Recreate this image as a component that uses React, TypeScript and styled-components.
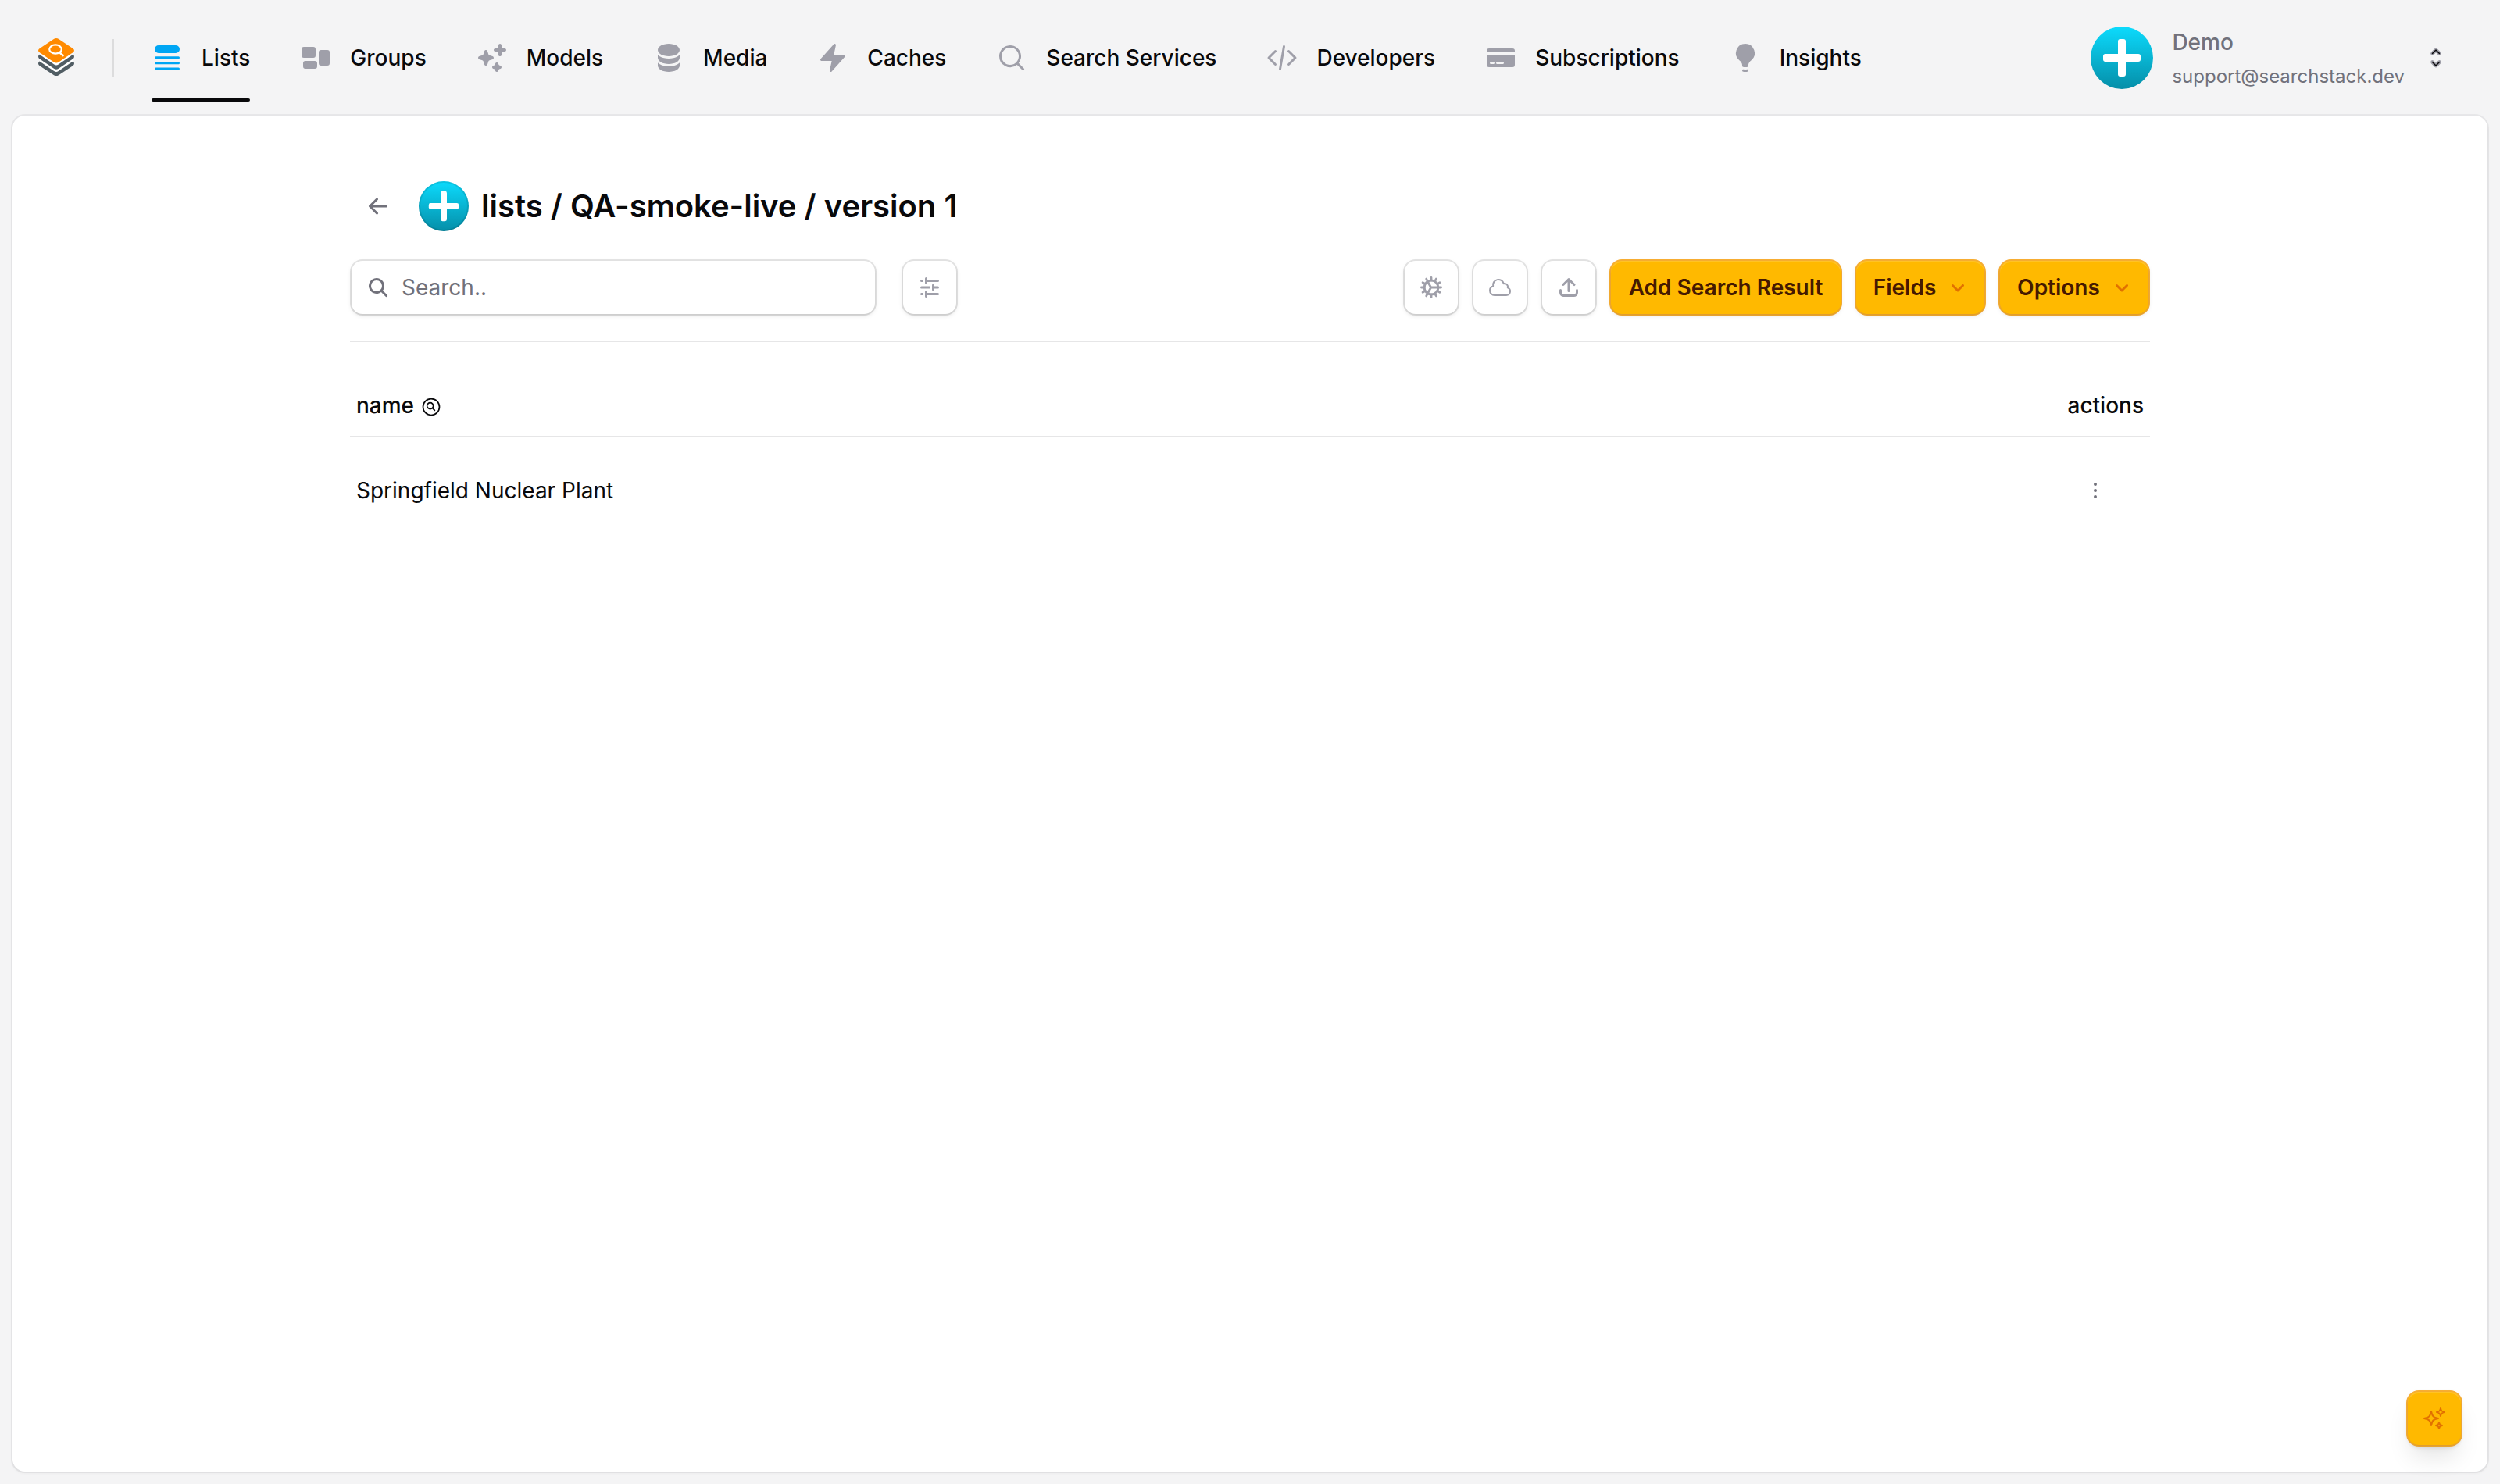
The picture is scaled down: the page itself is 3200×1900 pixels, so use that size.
import React from 'react';
import styled, { createGlobalStyle, css } from 'styled-components';
import {
  HiMiniQueueList,
  HiMiniRectangleGroup,
  HiMiniSparkles,
  HiMiniCircleStack,
  HiMiniBolt,
  HiMiniMagnifyingGlass,
  HiMiniCodeBracket,
  HiMiniCreditCard,
  HiMiniLightBulb,
  HiOutlineCloud,
  HiOutlineEllipsisVertical,
  HiOutlineMagnifyingGlassCircle,
  HiOutlineSparkles,
} from 'react-icons/hi2';

const GlobalStyle = createGlobalStyle`
  *, *::before, *::after { box-sizing: border-box; }
  body {
    margin: 0;
    background: #f4f4f5;
    color: #09090b;
    font-family: Inter, "Liberation Sans", sans-serif;
    font-size: 28px;
    line-height: 40px;
  }
  button, input { font: inherit; color: inherit; }
`;

const Page = styled.div`
  display: flex;
  flex-direction: column;
  height: 100vh;
`;

const Header = styled.header`
  display: flex;
  flex: none;
  height: 148px;
  padding: 0 32px;
`;

const Navbar = styled.nav`
  display: flex;
  flex: 1;
  align-items: center;
  gap: 32px;
`;

const LogoLink = styled.a`
  display: flex;
  padding: 16px;
`;

const LogoMark = styled.svg`
  display: block;
  width: 48px;
  height: 50px;
`;

const NavDivider = styled.span`
  width: 2px;
  height: 48px;
  background: rgba(9, 9, 11, 0.1);
`;

const NavItem = styled.a<{ $current?: boolean }>`
  position: relative;
  display: flex;
  align-items: center;
  gap: 24px;
  padding: 16px;
  font-weight: 500;
  white-space: nowrap;

  svg {
    width: 40px;
    height: 40px;
    color: ${(p) => (p.$current ? '#00a6f4' : '#9f9fa9')};
  }

  ${(p) =>
    p.$current &&
    css`
      &::after {
        content: '';
        position: absolute;
        left: 16px;
        right: 16px;
        bottom: -20px;
        height: 4px;
        border-radius: 4px;
        background: #09090b;
      }
    `}
`;

const Spacer = styled.div`
  flex: 1;
`;

const Account = styled.div`
  display: flex;
  align-items: center;
  gap: 24px;
  padding-right: 34px;
`;

const AccountText = styled.div`
  display: flex;
  flex-direction: column;
  margin-top: 8px;
  color: #71717b;
`;

const AccountName = styled.span`
  font-weight: 500;
  line-height: 40px;
`;

const AccountEmail = styled.span`
  font-size: 24px;
  line-height: 48px;
`;

const SelectorIcon = styled.svg`
  width: 32px;
  height: 32px;
`;

const Panel = styled.main`
  flex: 1;
  margin: 0 16px 16px;
  padding: 80px;
  border-radius: 16px;
  background: #fff;
  box-shadow: 0 0 0 2px rgba(9, 9, 11, 0.05), 0 2px 4px rgba(0, 0, 0, 0.05);
`;

const Content = styled.div`
  width: 2304px;
  margin: 0 auto;
`;

const TitleRow = styled.div`
  display: flex;
  align-items: center;
  gap: 16px;
  height: 72px;
`;

const PlainButton = styled.button`
  display: flex;
  align-items: center;
  justify-content: center;
  width: 72px;
  height: 72px;
  padding: 0;
  border: 0;
  background: none;
  color: #71717b;

  svg {
    width: 32px;
    height: 32px;
  }
`;

const Title = styled.h1`
  margin: 0;
  font-size: 40px;
  font-weight: 600;
  line-height: 64px;
`;

const AvatarFrame = styled.span<{ $size: number; $ring?: boolean }>`
  display: block;
  width: ${(p) => p.$size}px;
  height: ${(p) => p.$size}px;
  border-radius: 50%;
  outline: ${(p) => (p.$ring ? '2px solid rgba(0, 0, 0, 0.1)' : 'none')};
  outline-offset: -2px;

  svg {
    display: block;
    width: 100%;
    height: 100%;
  }
`;

const Toolbar = styled.div`
  display: flex;
  gap: 16px;
  margin-top: 32px;
  padding-bottom: 32px;
  border-bottom: 2px solid #e6e6e7;
`;

const raised = css`
  position: relative;
  isolation: isolate;
  border: 2px solid transparent;
  border-radius: 16px;

  &::before {
    content: '';
    position: absolute;
    inset: 0;
    z-index: -1;
    border-radius: 14px;
    box-shadow: 0 2px 6px rgba(0, 0, 0, 0.1), 0 2px 4px -2px rgba(0, 0, 0, 0.1);
  }
`;

const SearchField = styled.label`
  ${raised}
  display: flex;
  align-items: center;
  gap: 14px;
  width: 674px;
  height: 72px;
  margin-right: 16px;
  padding-left: 18px;
  background: rgba(9, 9, 11, 0.1);
  color: #71717b;

  &::before {
    background: #fff;
  }

  svg {
    flex: none;
    width: 32px;
    height: 32px;
  }
`;

const SearchInput = styled.input`
  flex: 1;
  min-width: 0;
  padding: 0;
  border: 0;
  outline: 0;
  background: none;

  &::placeholder {
    color: #71717b;
    opacity: 1;
  }
`;

const SquareButton = styled.button`
  ${raised}
  display: flex;
  align-items: center;
  justify-content: center;
  width: 72px;
  height: 72px;
  padding: 0;
  background: rgba(9, 9, 11, 0.1);
  color: #9f9fa9;

  &::before {
    background: #fff;
  }

  svg {
    width: 32px;
    height: 32px;
  }
`;

const amber = css`
  ${raised}
  background: rgba(249, 156, 0, 0.8);

  &::before {
    background: #ffb900;
  }

  &::after {
    content: '';
    position: absolute;
    inset: 0;
    z-index: -1;
    border-radius: 14px;
    box-shadow: inset 0 2px rgba(255, 255, 255, 0.15);
  }

  svg {
    width: 32px;
    height: 32px;
    color: #e17100;
  }
`;

const AmberButton = styled.button<{ $width: number }>`
  ${amber}
  display: flex;
  align-items: center;
  justify-content: center;
  gap: 16px;
  width: ${(p) => p.$width}px;
  height: 72px;
  padding: 0;
  color: #461901;
  font-weight: 600;
  white-space: nowrap;

  svg {
    flex: none;
    margin: 0 -4px;
  }
`;

const AssistantButton = styled.button`
  ${amber}
  position: fixed;
  right: 48px;
  bottom: 48px;
  display: flex;
  align-items: center;
  justify-content: center;
  width: 72px;
  height: 72px;
  padding: 0;
  box-shadow: 0 20px 30px -6px rgba(0, 0, 0, 0.1), 0 8px 12px -8px rgba(0, 0, 0, 0.1);
`;

const Table = styled.div`
  margin-top: 32px;
`;

const TableHead = styled.div`
  display: flex;
  align-items: center;
  justify-content: space-between;
  height: 90px;
  padding: 11px 8px 2px;
  border-bottom: 2px solid #e6e6e7;
  font-weight: 500;
`;

const ColumnName = styled.span`
  display: flex;
  align-items: center;
  gap: 8px;

  svg {
    width: 28px;
    height: 28px;
    margin-top: 4px;
  }
`;

const TableRow = styled.div`
  display: flex;
  align-items: center;
  justify-content: space-between;
  height: 136px;
  padding: 0 34px 0 8px;
`;

function Logo() {
  return (
    <LogoMark viewBox="0 0 48 50">
      <path d="M3 22.6 24 8 45 22.6V32L24 46 3 32Z" fill="#fff" />
      <g fill="#515d64">
        <path d="M2.6 29.4 21.2 42Q24 43.8 26.8 42L45.4 29.4Q47.2 30.6 47 32.4Q46.9 34 45.2 35.2L27 47.2Q24 49 21 47.2L2.8 35.2Q1.1 34 1 32.4Q0.8 30.6 2.6 29.4Z" />
        <path d="M2.6 20.8 21.2 33.6Q24 35.4 26.8 33.6L45.4 20.8Q47.2 22 47 23.8Q46.9 25.4 45.2 26.6L27 38.8Q24 40.6 21 38.8L2.8 26.6Q1.1 25.4 1 23.8Q0.8 22 2.6 20.8Z" />
      </g>
      <path
        d="M20.8 0.9Q24 -0.9 27.2 0.9L45.2 13Q48.8 15.6 45.2 18.3L27.2 30.6Q24 32.4 20.8 30.6L2.8 18.3Q-0.8 15.6 2.8 13Z"
        fill="#ff8a00"
      />
      <g fill="none" stroke="#fff" strokeWidth="2.2" strokeLinecap="round">
        <ellipse cx="23" cy="14" rx="7.8" ry="5.6" />
        <path d="M28.6 18.6l4 3.4" strokeWidth="2.6" />
      </g>
    </LogoMark>
  );
}

function Avatar({ size, ring, id }: { size: number; ring?: boolean; id: string }) {
  return (
    <AvatarFrame $size={size} $ring={ring}>
      <svg viewBox="0 0 80 80">
        <defs>
          <linearGradient id={id} x1="0" y1="0" x2="0" y2="1">
            <stop offset="0" stopColor="#0cdbfd" />
            <stop offset="1" stopColor="#058ea8" />
          </linearGradient>
        </defs>
        <circle cx="40" cy="40" r="40" fill={`url(#${id})`} />
        <rect x="16" y="35" width="48" height="10" rx="3" fill="#fff" />
        <rect x="35" y="16" width="10" height="48" rx="3" fill="#fff" />
      </svg>
    </AvatarFrame>
  );
}

function MicroIcon({ d }: { d: string }) {
  return (
    <svg viewBox="0 0 16 16" fill="currentColor">
      <path d={d} fillRule="evenodd" clipRule="evenodd" />
    </svg>
  );
}

function CogIcon() {
  return (
    <svg viewBox="0 0 32 32" fill="none" stroke="currentColor" strokeLinecap="round">
      <circle cx="16" cy="16" r="8.9" strokeWidth="3" />
      {Array.from({ length: 12 }, (_, i) => (
        <path key={i} d="M16 7V3.4" strokeWidth="2.8" transform={`rotate(${i * 30} 16 16)`} />
      ))}
      <path d="M24 16h-8.6M11.6 8.8l4 7.2-4 7.2" strokeWidth="2.8" strokeLinejoin="round" />
    </svg>
  );
}

const micro = {
  arrowLeft:
    'M14 8a.75.75 0 0 1-.75.75H4.56l3.22 3.22a.75.75 0 1 1-1.06 1.06l-4.5-4.5a.75.75 0 0 1 0-1.06l4.5-4.5a.75.75 0 0 1 1.06 1.06L4.56 7.25h8.69A.75.75 0 0 1 14 8Z',
  search:
    'M9.965 11.026a5 5 0 1 1 1.06-1.06l2.755 2.754a.75.75 0 1 1-1.06 1.06l-2.755-2.754ZM10.5 7a3.5 3.5 0 1 1-7 0 3.5 3.5 0 0 1 7 0Z',
  adjustments:
    'M6.5 2.25a.75.75 0 0 0-1.5 0v3a.75.75 0 0 0 1.5 0V4.5h6.75a.75.75 0 0 0 0-1.5H6.5v-.75ZM11 6.5a.75.75 0 0 0-1.5 0v3a.75.75 0 0 0 1.5 0v-.75h2.25a.75.75 0 0 0 0-1.5H11V6.5ZM5.75 10a.75.75 0 0 1 .75.75v.75h6.75a.75.75 0 0 1 0 1.5H6.5v.75a.75.75 0 0 1-1.5 0v-3a.75.75 0 0 1 .75-.75ZM2.75 7.25H8.5v1.5H2.75a.75.75 0 0 1 0-1.5ZM4 3H2.75a.75.75 0 0 0 0 1.5H4V3ZM2.75 11.5H4V13H2.75a.75.75 0 0 1 0-1.5Z',
  upload:
    'M7.25 10.25a.75.75 0 0 0 1.5 0V4.56l2.22 2.22a.75.75 0 1 0 1.06-1.06l-3.5-3.5a.75.75 0 0 0-1.06 0l-3.5 3.5a.75.75 0 0 0 1.06 1.06l2.22-2.22v5.69ZM3.5 9.75a.75.75 0 0 0-1.5 0v1.5A2.75 2.75 0 0 0 4.75 14h6.5A2.75 2.75 0 0 0 14 11.25v-1.5a.75.75 0 0 0-1.5 0v1.5c0 .69-.56 1.25-1.25 1.25h-6.5c-.69 0-1.25-.56-1.25-1.25v-1.5Z',
  chevronDown:
    'M4.22 6.22a.75.75 0 0 1 1.06 0L8 8.94l2.72-2.72a.75.75 0 1 1 1.06 1.06l-3.25 3.25a.75.75 0 0 1-1.06 0L4.22 7.28a.75.75 0 0 1 0-1.06Z',
};

const selectorPath = 'M11.5 10.5 16 6l4.5 4.5M11.5 21.5 16 26l4.5-4.5';

const navItems = [
  { label: 'Lists', Icon: HiMiniQueueList, current: true },
  { label: 'Groups', Icon: HiMiniRectangleGroup },
  { label: 'Models', Icon: HiMiniSparkles },
  { label: 'Media', Icon: HiMiniCircleStack },
  { label: 'Caches', Icon: HiMiniBolt },
  { label: 'Search Services', Icon: HiMiniMagnifyingGlass },
  { label: 'Developers', Icon: HiMiniCodeBracket },
  { label: 'Subscriptions', Icon: HiMiniCreditCard },
  { label: 'Insights', Icon: HiMiniLightBulb },
];

export default function App() {
  return (
    <Page>
      <GlobalStyle />
      <Header>
        <Navbar>
          <LogoLink>
            <Logo />
          </LogoLink>
          <NavDivider />
          {navItems.map(({ label, Icon, current }) => (
            <NavItem key={label} $current={current}>
              <Icon />
              {label}
            </NavItem>
          ))}
          <Spacer />
          <Account>
            <Avatar size={80} id="account-avatar" />
            <AccountText>
              <AccountName>Demo</AccountName>
              <AccountEmail>support@searchstack.dev</AccountEmail>
            </AccountText>
            <SelectorIcon viewBox="0 0 32 32" fill="none" strokeLinecap="round" strokeLinejoin="round">
              <path d={selectorPath} stroke="#9f9fa9" strokeWidth="4.6" />
              <path d={selectorPath} stroke="#09090b" strokeWidth="1.5" />
            </SelectorIcon>
          </Account>
        </Navbar>
      </Header>
      <Panel>
        <Content>
          <TitleRow>
            <PlainButton aria-label="Back">
              <MicroIcon d={micro.arrowLeft} />
            </PlainButton>
            <Avatar size={64} ring id="title-avatar" />
            <Title>lists / QA-smoke-live / version 1</Title>
          </TitleRow>
          <Toolbar>
            <SearchField>
              <MicroIcon d={micro.search} />
              <SearchInput placeholder="Search.." />
            </SearchField>
            <SquareButton>
              <MicroIcon d={micro.adjustments} />
            </SquareButton>
            <Spacer />
            <SquareButton>
              <CogIcon />
            </SquareButton>
            <SquareButton>
              <HiOutlineCloud />
            </SquareButton>
            <SquareButton>
              <MicroIcon d={micro.upload} />
            </SquareButton>
            <AmberButton $width={298}>Add Search Result</AmberButton>
            <AmberButton $width={168}>
              Fields
              <MicroIcon d={micro.chevronDown} />
            </AmberButton>
            <AmberButton $width={194}>
              Options
              <MicroIcon d={micro.chevronDown} />
            </AmberButton>
          </Toolbar>
          <Table>
            <TableHead>
              <ColumnName>
                name
                <HiOutlineMagnifyingGlassCircle />
              </ColumnName>
              <span>actions</span>
            </TableHead>
            <TableRow>
              <span>Springfield Nuclear Plant</span>
              <PlainButton aria-label="More options">
                <HiOutlineEllipsisVertical />
              </PlainButton>
            </TableRow>
          </Table>
        </Content>
      </Panel>
      <AssistantButton aria-label="Assistant">
        <HiOutlineSparkles />
      </AssistantButton>
    </Page>
  );
}
